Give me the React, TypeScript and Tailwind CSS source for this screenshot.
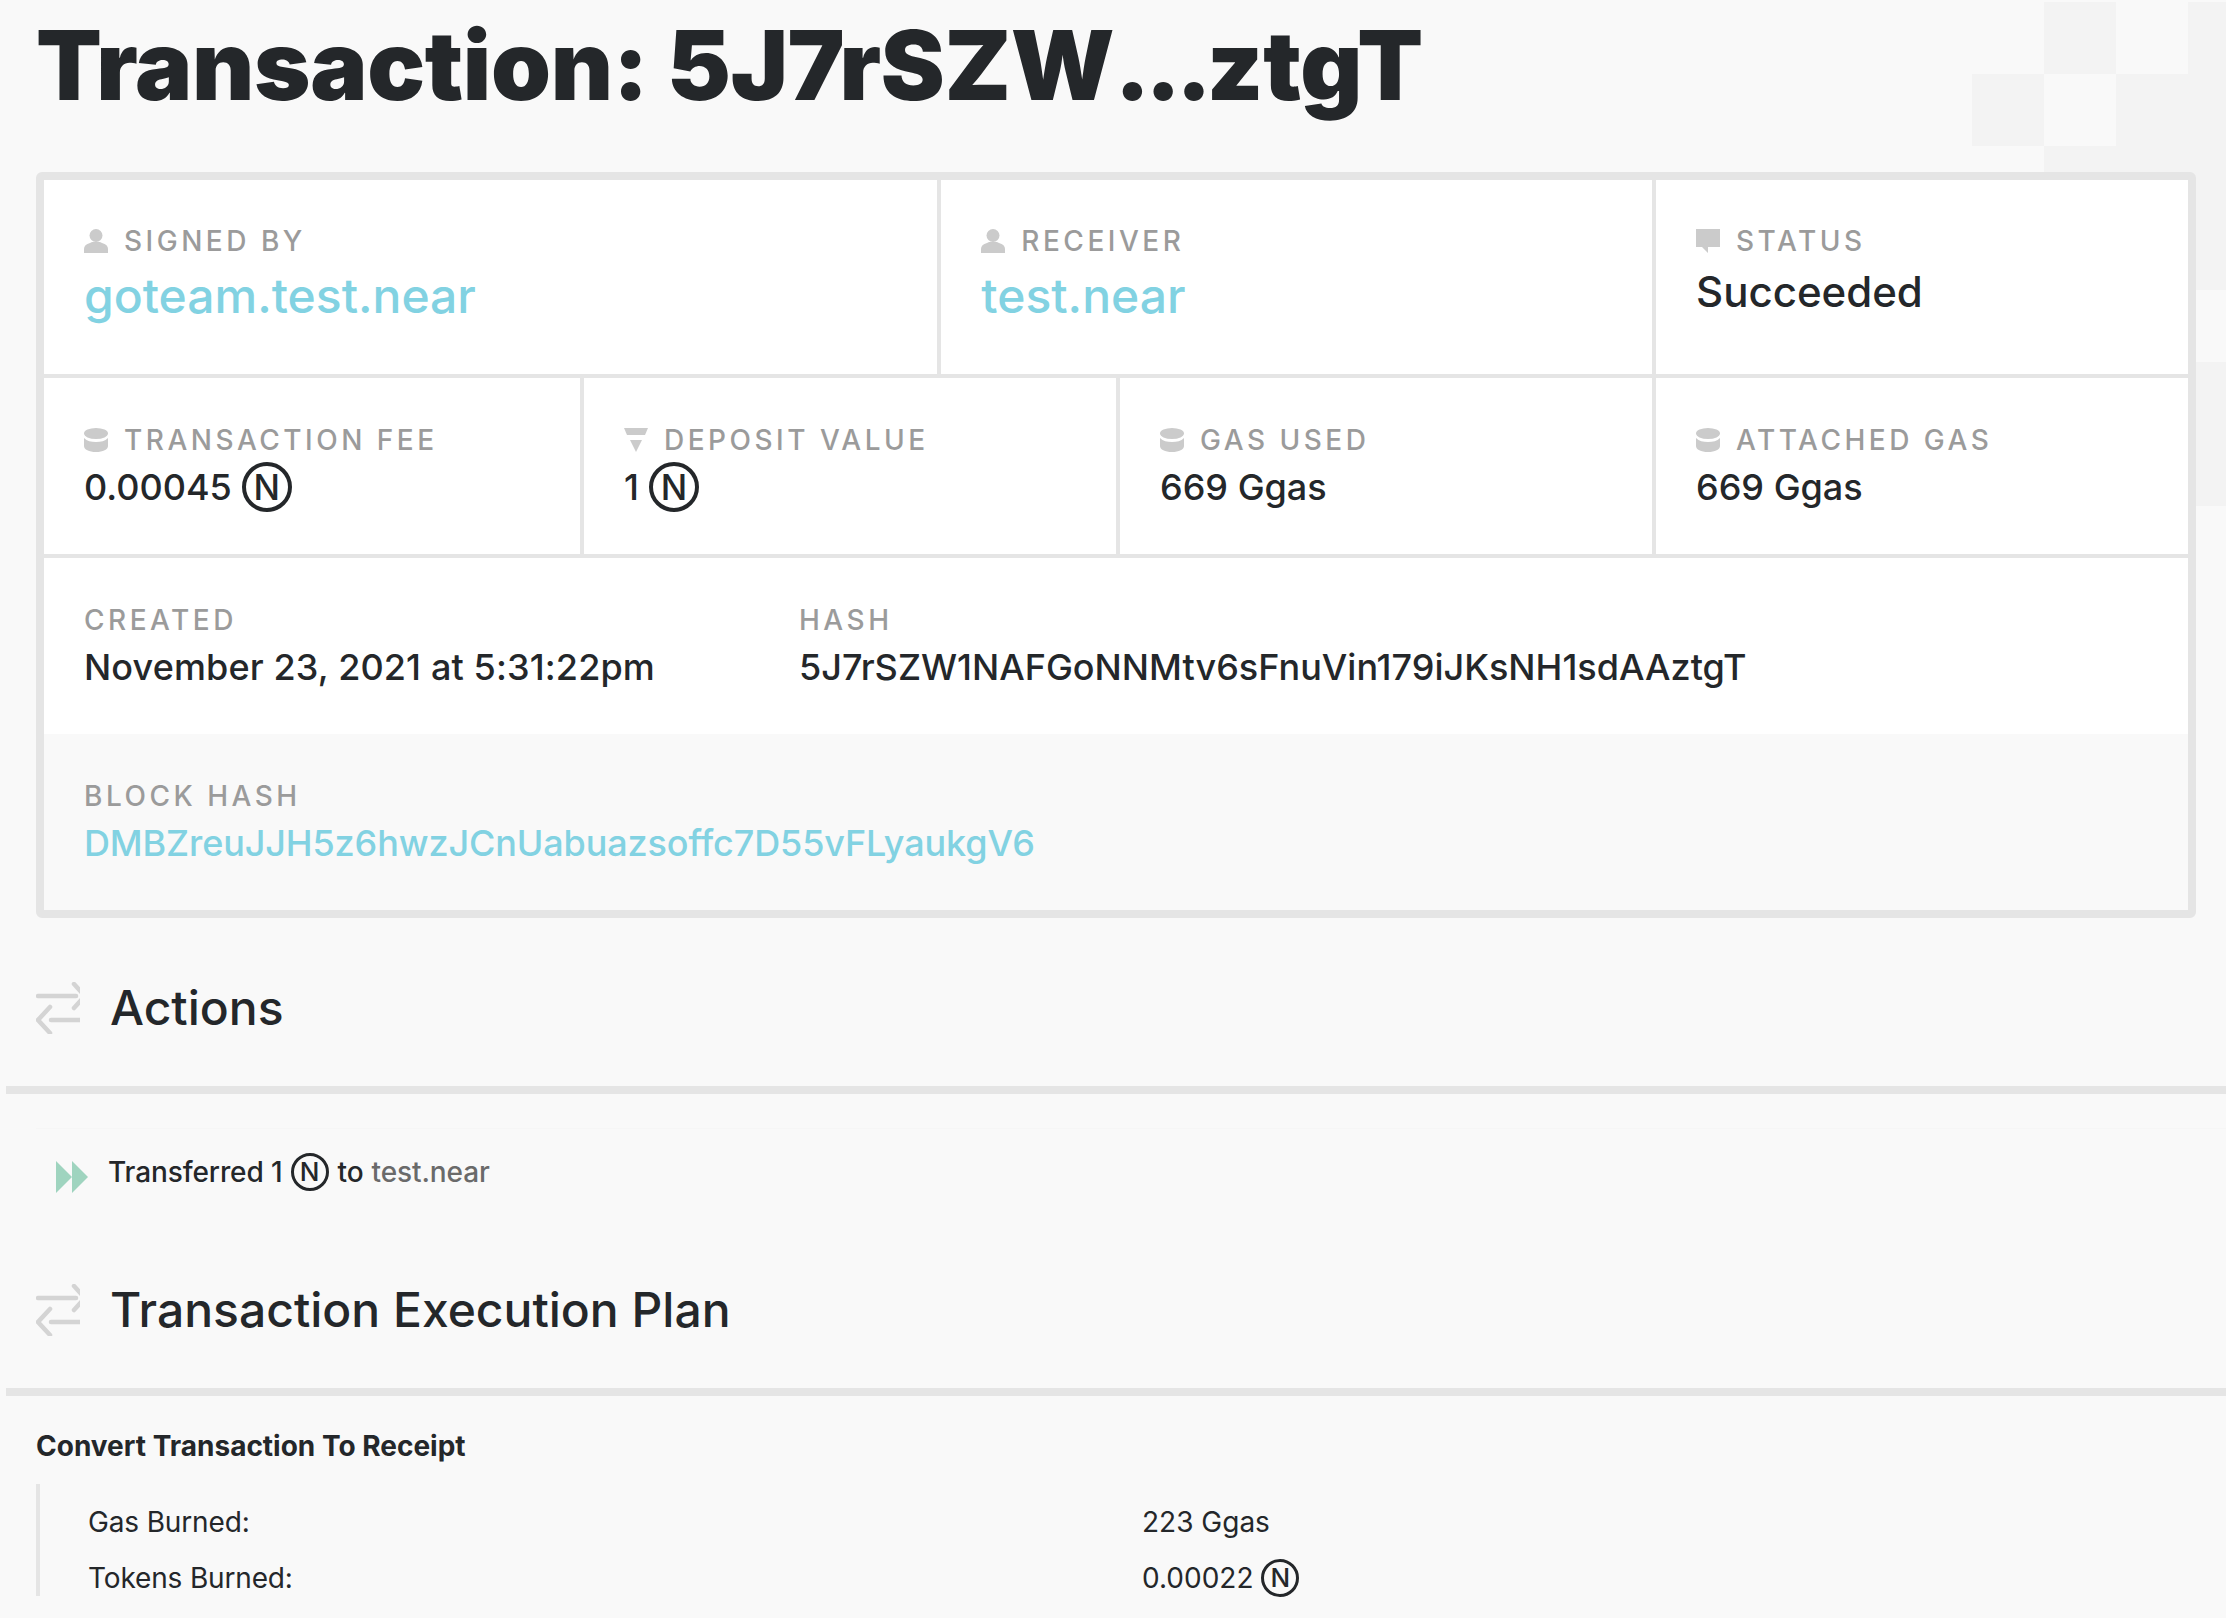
const CELL_DARK = "absolute w-[72px] h-[72px] bg-[#f3f3f3]";

function Person() {
  return (
    <svg width="24" height="24" viewBox="0 0 24 24" className="shrink-0 fill-[#cbcbcb]">
      <circle cx="12" cy="6.500" r="6.500" />
      <path d="M0 24v-4c0-3 2-5 6-6l2-1h8l2 1c4 1 6 3 6 6v4z" />
    </svg>
  );
}

function Coins() {
  return (
    <svg width="24" height="24" viewBox="0 0 24 24" className="shrink-0 fill-[#cbcbcb]">
      <ellipse cx="12" cy="5.500" rx="12" ry="5.500" />
      <path d="M0 10c3 3 7 4 12 4s9-1 12-4v8c0 3.500-5 6-12 6S0 21.500 0 18z" />
    </svg>
  );
}

function Deposit() {
  return (
    <svg width="24" height="24" viewBox="0 0 24 24" className="shrink-0 fill-[#cbcbcb]">
      <path d="M0 0h24l-3 7H3z" />
      <path d="M6 12h12l-6 12z" />
    </svg>
  );
}

function Status() {
  return (
    <svg width="24" height="24" viewBox="0 0 24 24" className="shrink-0 fill-[#cbcbcb]">
      <path d="M0 0h24v18H12v6l-6-6H0z" />
    </svg>
  );
}

function Arrows() {
  return (
    <svg width="44" height="52" viewBox="0 0 44 52" fill="none" className="shrink-0 stroke-[#d4d4d4]" strokeWidth="4.500" strokeLinecap="round">
      <path d="M2 14h38" />
      <path d="M38 2l11 12-11 12" />
      <path d="M15 38h34" />
      <path d="M14 25L2 38l12 13" />
    </svg>
  );
}

function Near({ size }: { size: "lg" | "sm" }) {
  return (
    <span
      className={
        size === "lg"
          ? "inline-flex w-[50px] h-[50px] items-center justify-center rounded-full border-[4px] border-[#24272a] text-[35px] font-medium leading-none ml-[10px] shrink-0"
          : "inline-flex w-[38px] h-[38px] items-center justify-center rounded-full border-[3px] border-[#24272a] text-[26px] font-medium leading-none ml-[8px] shrink-0"
      }
    >
      N
    </span>
  );
}

function Label({ children }: { children: string }) {
  return (
    <div className="text-[28px] leading-[32px] font-medium tracking-[3.500px] text-[#9b9b9b] uppercase">
      {children}
    </div>
  );
}

function IconLabel({ icon, children }: { icon: React.ReactNode; children: string }) {
  return (
    <div className="flex items-center gap-[16px] h-[32px]">
      {icon}
      <Label>{children}</Label>
    </div>
  );
}

function SectionTitle({ children }: { children: string }) {
  return (
    <div className="flex items-center gap-[30px] pl-[36px]">
      <Arrows />
      <h2 className="text-[48px] leading-[56px] font-medium text-[#24272a]">{children}</h2>
    </div>
  );
}

const STATS = [
  { label: "TRANSACTION FEE", value: "0.00045", near: true, icon: <Coins /> },
  { label: "DEPOSIT VALUE", value: "1", near: true, icon: <Deposit /> },
  { label: "GAS USED", value: "669 Ggas", near: false, icon: <Coins /> },
  { label: "ATTACHED GAS", value: "669 Ggas", near: false, icon: <Coins /> },
];

export default function App() {
  return (
    <div className="relative w-[2226px] h-[1618px] overflow-hidden bg-[#f9f9f9] text-[#24272a] font-['Inter',sans-serif]">
      {/* Checker pattern behind the page */}
      <div aria-hidden className="absolute inset-0">
        <div className={`${CELL_DARK} left-[2044px] top-[2px]`} />
        <div className={`${CELL_DARK} left-[2188px] top-[2px]`} />
        <div className={`${CELL_DARK} left-[1972px] top-[74px]`} />
        <div className={`${CELL_DARK} left-[2116px] top-[74px]`} />
        <div className={`${CELL_DARK} left-[2188px] top-[74px]`} />
        <div className={`${CELL_DARK} left-[2044px] top-[146px]`} />
        <div className={`${CELL_DARK} left-[2116px] top-[146px]`} />
        <div className={`${CELL_DARK} left-[2188px] top-[146px]`} />
        <div className={`${CELL_DARK} left-[2188px] top-[218px]`} />
        <div className={`${CELL_DARK} left-[2188px] top-[362px]`} />
        <div className={`${CELL_DARK} left-[2188px] top-[434px]`} />
      </div>

      <div className="relative">
        <h1 className="pl-[36px] pt-[11px] h-[172px] text-[96px] leading-[108px] font-black tracking-[-0.300px] text-[#24272a]">
          Transaction: 5J7rSZW<span className="tracking-[-5px]">...</span>ztgT
        </h1>

        {/* Summary card */}
        <div className="ml-[36px] w-[2160px] border-[8px] border-[#e5e5e5] rounded-[6px] bg-white">
          <div className="grid grid-cols-12 h-[198px] border-b-[4px] border-[#e5e5e5]">
            <div className="col-span-5 pl-[40px] pt-[45px]">
              <IconLabel icon={<Person />}>SIGNED BY</IconLabel>
              <div className="text-[48px] leading-[60px] font-medium mt-[9px] text-[#82d2e2]">goteam.test.near</div>
            </div>
            <div className="col-span-4 border-l-[4px] border-[#e5e5e5] pl-[40px] pt-[45px]">
              <IconLabel icon={<Person />}>RECEIVER</IconLabel>
              <div className="text-[48px] leading-[60px] font-medium mt-[9px] text-[#82d2e2]">test.near</div>
            </div>
            <div className="col-span-3 border-l-[4px] border-[#e5e5e5] pl-[40px] pt-[45px]">
              <IconLabel icon={<Status />}>STATUS</IconLabel>
              <div className="text-[42px] leading-[56px] font-medium mt-[7px]">Succeeded</div>
            </div>
          </div>

          <div className="grid grid-cols-4 h-[180px] border-b-[4px] border-[#e5e5e5]">
            {STATS.map((stat, i) => (
              <div
                key={stat.label}
                className={i > 0 ? "border-l-[4px] border-[#e5e5e5] pl-[40px] pt-[46px]" : "pl-[40px] pt-[46px]"}
              >
                <IconLabel icon={stat.icon}>{stat.label}</IconLabel>
                <div className="flex items-center text-[36px] leading-[50px] font-medium mt-[6px]">
                  {stat.value}
                  {stat.near && <Near size="lg" />}
                </div>
              </div>
            ))}
          </div>

          <div className="flex h-[176px] pl-[40px] pt-[46px]">
            <div className="w-[715px]">
              <Label>CREATED</Label>
              <div className="text-[36px] leading-[50px] font-medium tracking-[0.130px] mt-[6px]">November 23, 2021 at 5:31:22pm</div>
            </div>
            <div>
              <Label>HASH</Label>
              <div className="text-[36px] leading-[50px] font-medium mt-[6px]">5J7rSZW1NAFGoNNMtv6sFnuVin179iJKsNH1sdAAztgT</div>
            </div>
          </div>

          <div className="h-[176px] pl-[40px] pt-[46px] bg-[#f9f9f9]">
            <Label>BLOCK HASH</Label>
            <div className="text-[36px] leading-[50px] font-medium tracking-[-0.130px] mt-[6px] text-[#82d2e2]">DMBZreuJJH5z6hwzJCnUabuazsoffc7D55vFLyaukgV6</div>
          </div>
        </div>

        {/* Actions */}
        <div className="mt-[62px]">
          <SectionTitle>Actions</SectionTitle>
        </div>
        <div className="mt-[50px] ml-[6px] h-[8px] bg-[#e5e5e5]" />

        <div className="mt-[34px] ml-[36px] pt-[15px] border-t border-[#f6f6f6]">
          <div className="flex items-center pl-[20px] h-[56px]">
            <svg width="32" height="32" viewBox="0 0 32 32" className="shrink-0 fill-[#9fd4bf] mt-[10px]">
              <path d="M0 0l16 16L0 32z" />
              <path d="M16 0l16 16-16 16z" />
            </svg>
            <div className="flex items-center ml-[20px] text-[28px] leading-[40px] font-medium tracking-[-0.100px]">
              Transferred 1<Near size="sm" />
              <span className="ml-[9px]">to</span>
              <span className="ml-[8px] text-[#6a6a6a]">test.near</span>
            </div>
          </div>
        </div>

        {/* Execution plan */}
        <div className="mt-[82px]">
          <SectionTitle>Transaction Execution Plan</SectionTitle>
        </div>
        <div className="mt-[50px] ml-[6px] h-[8px] bg-[#e5e5e5]" />

        <div className="pl-[36px] pt-[30px]">
          <div className="text-[28px] leading-[40px] font-bold">Convert Transaction To Receipt</div>
          <div className="mt-[18px] border-l-[4px] border-[#e5e5e5] h-[112px] pl-[48px] pt-[18px] text-[28px] leading-[40px]">
            <div className="grid grid-cols-[1054px_1fr] h-[56px]">
              <div className="tracking-[-0.150px]">Gas Burned:</div>
              <div>223 Ggas</div>
            </div>
            <div className="grid grid-cols-[1054px_1fr]">
              <div className="tracking-[-0.150px]">Tokens Burned:</div>
              <div className="flex items-center">
                0.00022<Near size="sm" />
              </div>
            </div>
          </div>
        </div>
      </div>
    </div>
  );
}
